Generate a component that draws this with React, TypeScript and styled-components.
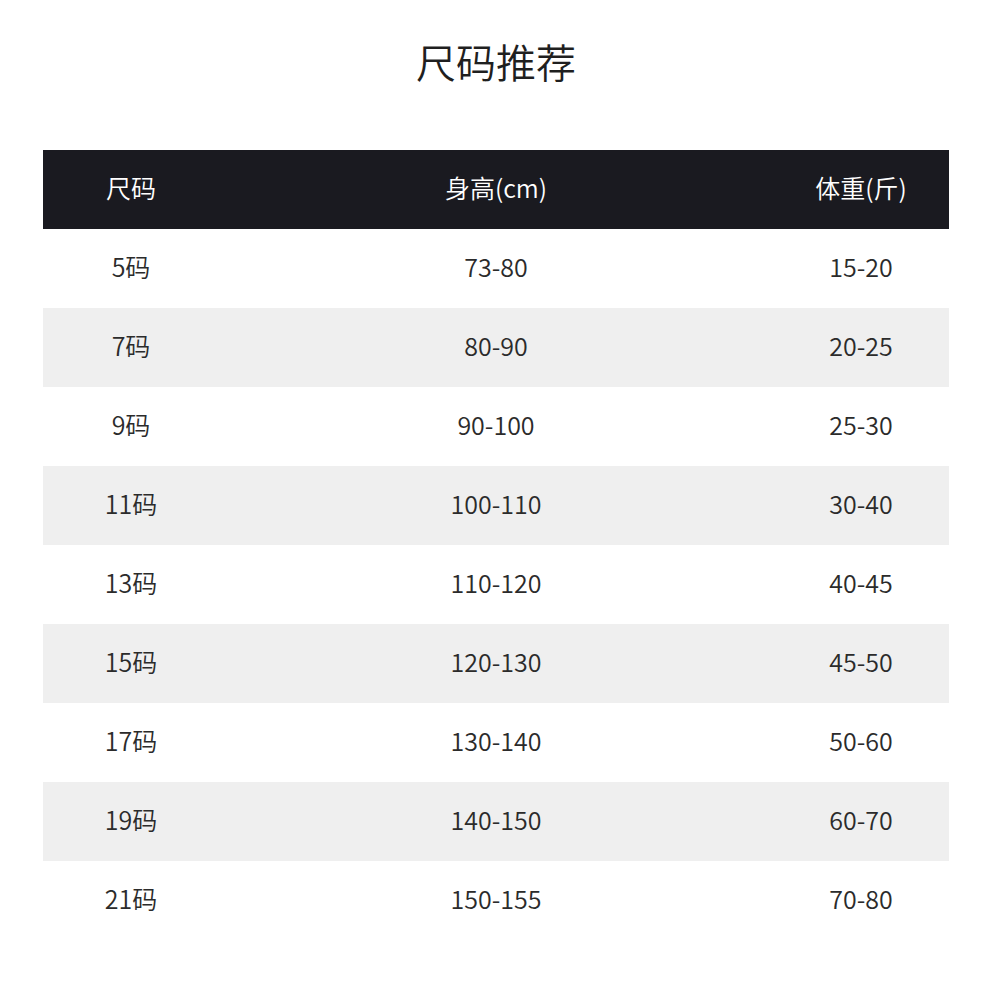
import { createGlobalStyle, styled } from 'styled-components';

const GlobalStyle = createGlobalStyle`
  html, body {
    margin: 0;
    padding: 0;
    background: #ffffff;
  }
  body {
    font-family: "Noto Sans CJK SC", "Noto Sans", sans-serif;
  }
`;

const Page = styled.div`
  width: 990px;
  height: 983px;
  padding: 37px 41px 0 43px;
  box-sizing: border-box;
`;

const Title = styled.h1`
  margin: 0;
  height: 113px;
  font-size: 40px;
  line-height: 48px;
  font-weight: 350;
  color: #1f1f1f;
  text-align: center;
`;

const Table = styled.div`
  width: 906px;
  display: flex;
  flex-direction: column;
`;

const Row = styled.div<{ kind?: 'head' | 'odd' | 'even' }>`
  display: grid;
  grid-template-columns: 176px 554px 176px;
  height: 79px;
  box-sizing: border-box;
  padding-bottom: 5px;
  align-items: center;
  font-size: 25px;
  font-weight: 350;
  background: ${p => p.kind === 'head' ? '#1a1a20' : p.kind === 'even' ? '#efefef' : '#ffffff'};
  color: ${p => p.kind === 'head' ? '#ffffff' : '#2b2b2b'};
`;

const Cell = styled.div`
  text-align: center;
  white-space: nowrap;
`;

type SizeRow = { size: string; height: string; weight: string };

const rows: SizeRow[] = [
  { size: '5码', height: '73-80', weight: '15-20' },
  { size: '7码', height: '80-90', weight: '20-25' },
  { size: '9码', height: '90-100', weight: '25-30' },
  { size: '11码', height: '100-110', weight: '30-40' },
  { size: '13码', height: '110-120', weight: '40-45' },
  { size: '15码', height: '120-130', weight: '45-50' },
  { size: '17码', height: '130-140', weight: '50-60' },
  { size: '19码', height: '140-150', weight: '60-70' },
  { size: '21码', height: '150-155', weight: '70-80' },
];

export default function App() {
  return (
    <>
      <GlobalStyle />
      <Page>
        <Title>尺码推荐</Title>
        <Table>
          <Row kind='head'>
            <Cell>尺码</Cell>
            <Cell>身高(cm)</Cell>
            <Cell>体重(斤)</Cell>
          </Row>
          {rows.map((r, i) => (
            <Row key={r.size} kind={i % 2 === 0 ? 'odd' : 'even'}>
              <Cell>{r.size}</Cell>
              <Cell>{r.height}</Cell>
              <Cell>{r.weight}</Cell>
            </Row>
          ))}
        </Table>
      </Page>
    </>
  );
}
